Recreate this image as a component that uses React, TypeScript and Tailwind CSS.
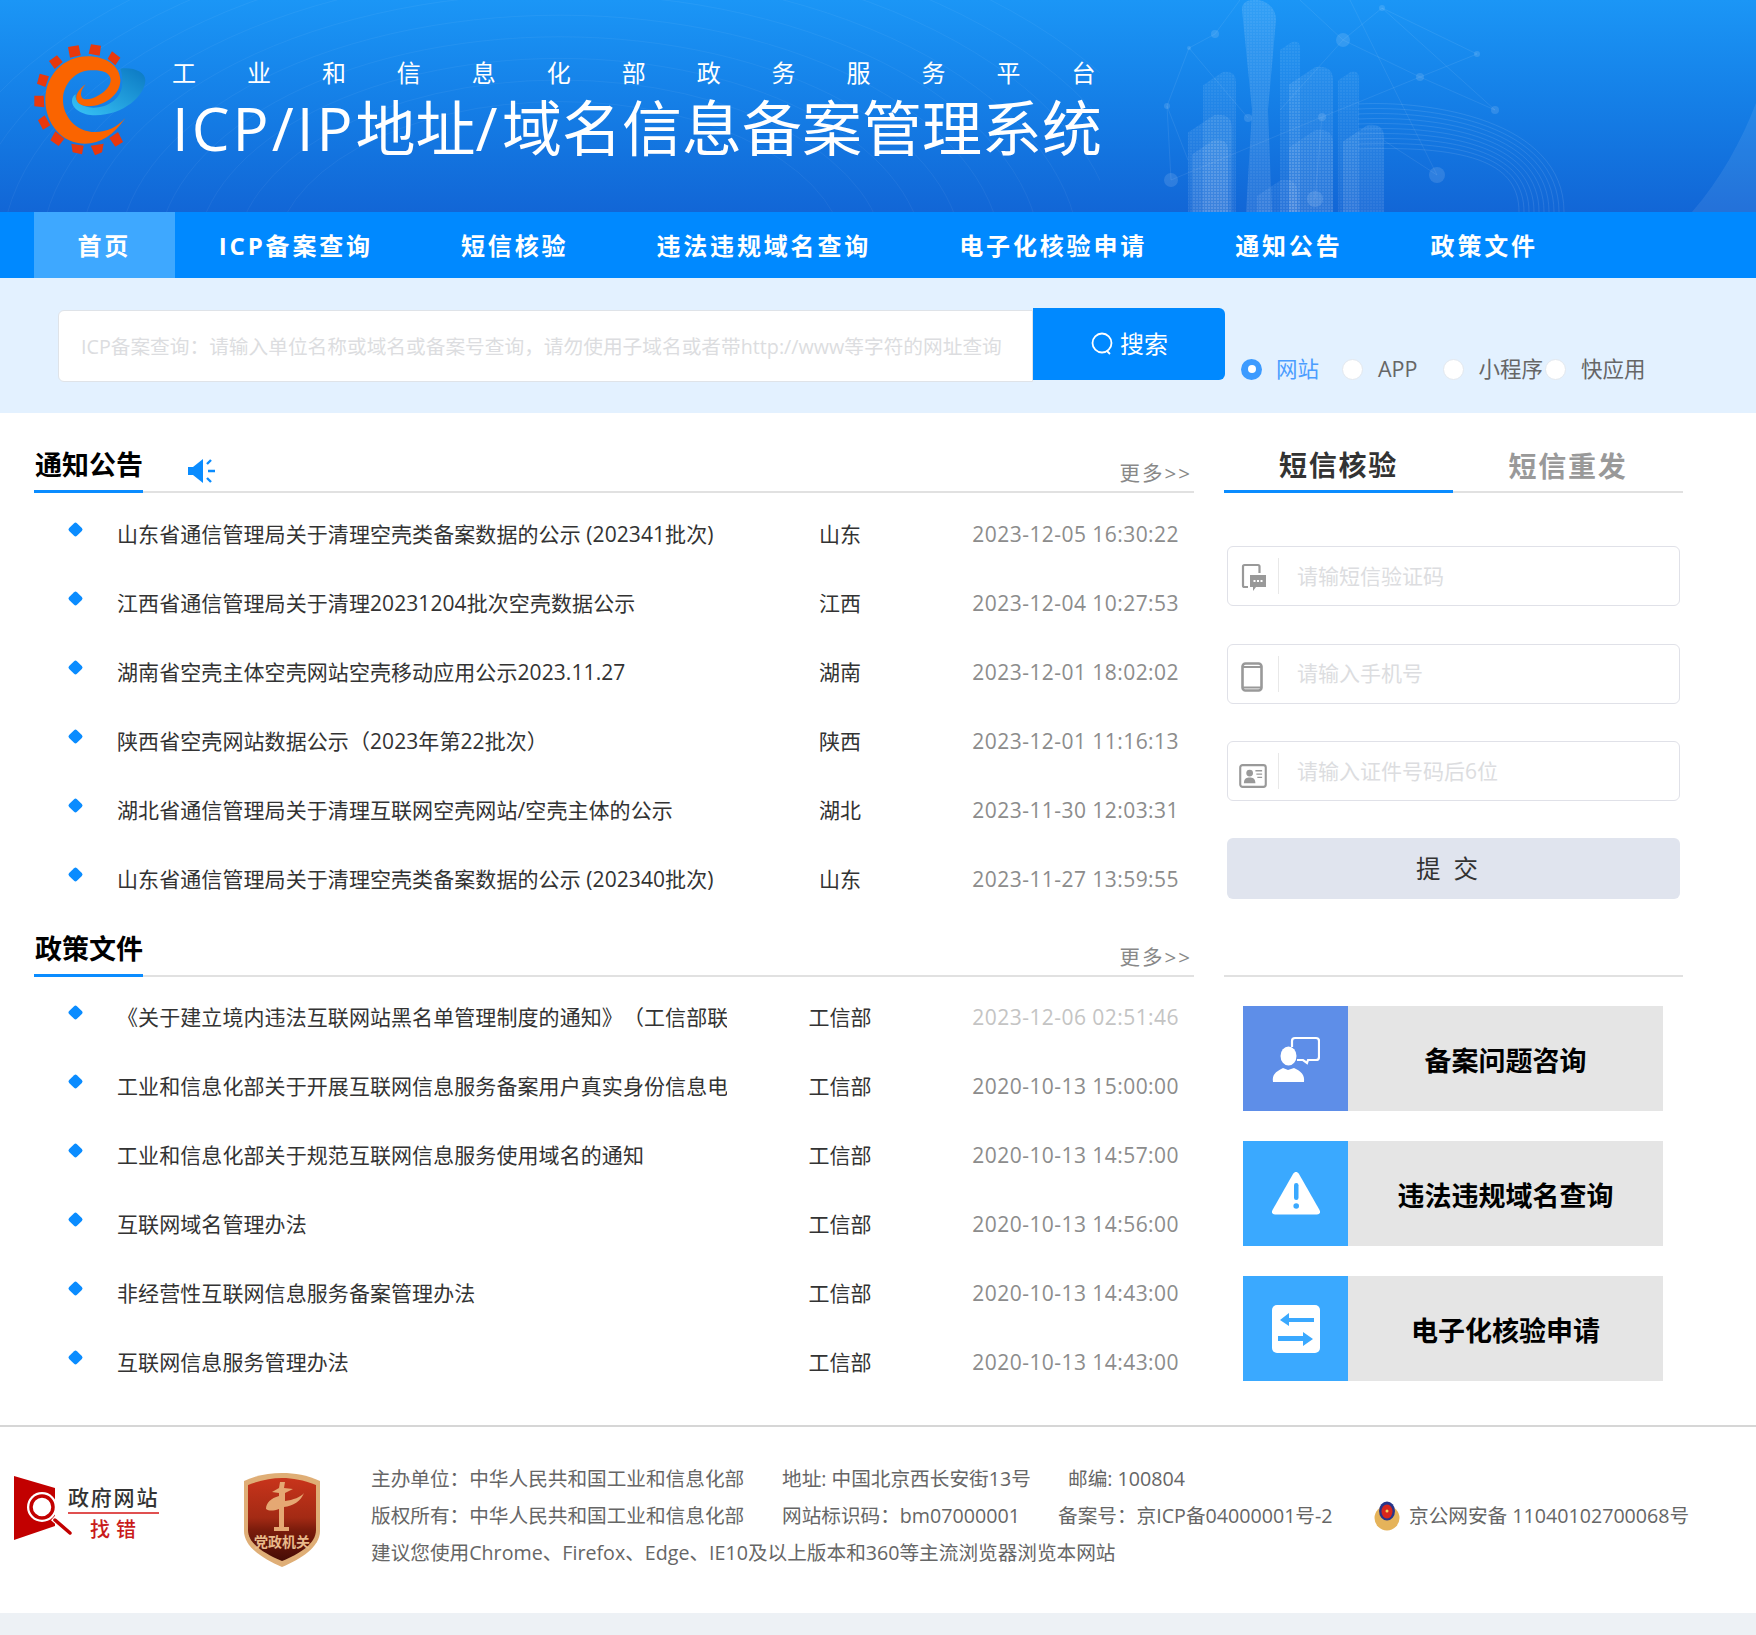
import type { ReactNode } from 'react';

const FONT = "font-['Open_Sans','Noto_Sans_CJK_SC',sans-serif]";

const notices = [
  ['山东省通信管理局关于清理空壳类备案数据的公示 (202341批次)', '山东', '2023-12-05 16:30:22'],
  ['江西省通信管理局关于清理20231204批次空壳数据公示', '江西', '2023-12-04 10:27:53'],
  ['湖南省空壳主体空壳网站空壳移动应用公示2023.11.27', '湖南', '2023-12-01 18:02:02'],
  ['陕西省空壳网站数据公示（2023年第22批次）', '陕西', '2023-12-01 11:16:13'],
  ['湖北省通信管理局关于清理互联网空壳网站/空壳主体的公示', '湖北', '2023-11-30 12:03:31'],
  ['山东省通信管理局关于清理空壳类备案数据的公示 (202340批次)', '山东', '2023-11-27 13:59:55'],
];

const policies = [
  ['《关于建立境内违法互联网站黑名单管理制度的通知》（工信部联', '工信部', '2023-12-06 02:51:46'],
  ['工业和信息化部关于开展互联网信息服务备案用户真实身份信息电', '工信部', '2020-10-13 15:00:00'],
  ['工业和信息化部关于规范互联网信息服务使用域名的通知', '工信部', '2020-10-13 14:57:00'],
  ['互联网域名管理办法', '工信部', '2020-10-13 14:56:00'],
  ['非经营性互联网信息服务备案管理办法', '工信部', '2020-10-13 14:43:00'],
  ['互联网信息服务管理办法', '工信部', '2020-10-13 14:43:00'],
];

const navItems = ['首页', 'ICP备案查询', '短信核验', '违法违规域名查询', '电子化核验申请', '通知公告', '政策文件'];

function Logo() {
  const teeth = [
    '203,80 235,75 241,105 209,112', '272,72 302,76 298,106 265,100', '335,93 360,112 345,135 322,115',
    '146,122 170,105 187,125 163,146', '118,160 146,168 135,200 110,190', '102,226 130,226 132,261 102,258',
    '113,300 133,285 150,315 128,328', '165,333 192,355 175,377 150,360', '213,370 250,376 245,402 217,396',
    '271,376 310,370 305,396 284,405', '327,353 353,335 368,365 345,379',
  ];
  return (
    <svg viewBox="95 65 345 345" className="w-[115px] h-[115px] shrink-0">
      <defs>
        <linearGradient id="swoosh" x1="0" y1="1" x2="1" y2="0">
          <stop offset="0" stopColor="#38c4f7" />
          <stop offset="1" stopColor="#0b78c2" />
        </linearGradient>
      </defs>
      {teeth.map(p => <polygon key={p} points={p} fill="#e8380d" />)}
      <path d="M360 145C400 140 435 155 435 180C435 225 370 285 285 285C245 285 215 265 215 242C215 232 220 225 226 222C222 240 240 262 280 262C320 262 358 238 365 200C368 180 365 160 360 145Z" fill="url(#swoosh)" />
      <path d="M375 293C340 345 300 370 255 370C185 370 135 310 135 238C135 165 190 108 262 108C320 108 360 140 360 180C360 225 310 258 265 258C240 258 225 245 228 228C232 212 245 200 256 192C245 205 238 220 245 232C252 240 275 238 295 225C320 210 335 190 330 172C325 155 300 148 270 150C225 152 190 190 188 235C186 285 225 335 285 335C320 335 350 320 375 293Z" fill="#fa6400" />
    </svg>
  );
}

function CityArt() {
  const columns = [
    [180, 42, 20, 170, 0.05], [103, 72, 33, 140, 0.06], [238, 72, 21, 140, 0.05], [189, 67, 44, 145, 0.07],
    [88, 115, 44, 97, 0.07], [92, 140, 36, 72, 0.07], [243, 125, 41, 87, 0.08], [189, 130, 44, 82, 0.05], [157, 180, 40, 32, 0.06],
  ];
  const lines = [
    '89,48 115,34 140,0', '89,48 67,106 71,180', '89,48 148,118', '67,106 88,160', '243,40 282,8', '243,40 180,110', '243,40 320,77 395,110',
    '282,8 377,54 320,77 222,117', '282,8 395,110', '250,0 337,175', '200,0 243,40', '283,140 337,175', '71,180 222,117', '222,117 215,199',
  ];
  const nodes = [
    [89, 48, 2], [115, 34, 4], [243, 40, 7], [282, 8, 3], [377, 54, 3], [320, 77, 4], [395, 110, 4],
    [337, 175, 8], [67, 106, 3], [71, 180, 7], [215, 199, 8], [222, 117, 4], [148, 118, 4],
  ];
  const building = (x: number, y: number, w: number, h: number) =>
    `M${x} ${y + h}V${y + w * 0.4}L${x + w * 0.6} ${y}Q${x + w} ${y - 2} ${x + w} ${y + w * 0.3}V${y + h}Z`;
  return (
    <svg viewBox="0 0 656 212" className="absolute right-0 top-0 w-[656px] h-[212px]">
      <defs>
        <pattern id="mesh" width="3" height="3" patternUnits="userSpaceOnUse">
          <circle cx="1" cy="1" r="0.7" fill="#fff" fillOpacity="0.14" />
        </pattern>
      </defs>
      {lines.map(l => <polyline key={l} points={l} fill="none" stroke="#fff" strokeOpacity="0.08" />)}
      {nodes.map(([x, y, r]) => <circle key={`${x}-${y}`} cx={x} cy={y} r={r} fill="#fff" fillOpacity="0.12" />)}
      {[0, 5, 10, 15, 20, 25, 30, 35, 40, 45].map(d => (
        <path key={d} d={`M${258} ${104 + d}C${330 + d} ${100 + d} ${464 - d} ${120 + d} ${464 - d} 212`} fill="none" stroke="#fff" strokeOpacity="0.1" />
      ))}
      {columns.map(([x, y, w, h, o]) => (
        <g key={`${x}-${y}`}>
          <path d={building(x, y, w, h)} fill="#fff" fillOpacity={o} />
          <path d={building(x, y, w, h)} fill="url(#mesh)" />
        </g>
      ))}
      <path d="M142 10C142 0 150 0 158 0C170 2 176 10 176 20L168 110L172 212H146L152 110Z" fill="#fff" fillOpacity="0.1" />
      <path d="M142 10C142 0 150 0 158 0C170 2 176 10 176 20L168 110L172 212H146L152 110Z" fill="url(#mesh)" />
      <path d="M592 212C620 180 642 140 656 103V212Z" fill="#fff" fillOpacity="0.08" />
    </svg>
  );
}

function WaveArt() {
  return (
    <svg viewBox="0 0 1100 212" className="absolute left-0 top-0 w-[1100px] h-[212px]">
      {[220, 250, 280, 310, 340, 370, 400, 430, 460, 490].map(r => (
        <ellipse key={r} cx="560" cy="260" rx={r * 1.3} ry={r * 0.72} fill="none" stroke="#fff" strokeOpacity="0.05" />
      ))}
    </svg>
  );
}

function Speaker() {
  return (
    <svg viewBox="0 0 28 26" className="w-[28px] h-[26px] text-[#0a8cff]">
      <path d="M0 9H5L15 1V25L5 17H0Z" fill="currentColor" />
      <path d="M19 6L23 2M20 13H27M19 20L23 24" stroke="currentColor" strokeWidth="2.4" fill="none" />
    </svg>
  );
}

function SectionHead({ title, icon }: { title: string; icon?: ReactNode }) {
  return (
    <div className="flex items-end border-b-2 border-[#e1e1e1] h-[80px]">
      <h2 className="text-[27px] font-bold text-black leading-[40px] border-b-[3px] border-[#0a8cff] pb-[5px] -mb-[2px] pl-px">{title}</h2>
      {icon && <span className="ml-[45px] mb-[7px]">{icon}</span>}
      <a className="ml-auto mr-[2px] mb-[2px] text-[20.500px] text-[#888] tracking-[2px]">更多&gt;&gt;</a>
    </div>
  );
}

function NewsRows({ rows, firstFaded }: { rows: string[][]; firstFaded?: boolean }) {
  return (
    <ul className="pt-[7px] [text-spacing-trim:space-all]">
      {rows.map(([title, area, date], i) => (
        <li key={title + date} className="flex items-center h-[69px] text-[21px]">
          <span className="ml-[36px] w-[11px] h-[11px] rotate-45 rounded-[2px] bg-[#0a8cff] -mt-[10px] shrink-0" />
          <a className="ml-[36px] w-[610px] overflow-hidden whitespace-nowrap text-[#333] tracking-[0.08px]">{title}</a>
          <span className="w-[100px] ml-[63px] text-center text-[#333]">{area}</span>
          <span className={`ml-auto mr-[15px] tracking-[0.45px] ${firstFaded && i === 0 ? 'text-[#c4c4c4]' : 'text-[#8c8c8c]'}`}>{date}</span>
        </li>
      ))}
    </ul>
  );
}

function SmsIcon() {
  return (
    <svg viewBox="0 0 26 30" className="w-[26px] h-[30px] text-[#999]">
      <path d="M7 24H3.5A1.5 1.5 0 0 1 2 22.500V3.500A1.500 1.500 0 0 1 3.500 2H17A1.500 1.500 0 0 1 18.500 3.500V10" fill="none" stroke="currentColor" strokeWidth="2.200" />
      <path d="M9 12H25V24H15L12 28V24H9Z" fill="currentColor" />
      <path d="M12.500 18H14.500M16 18H18M19.500 18H21.500" stroke="#fff" strokeWidth="2.200" />
    </svg>
  );
}

function PhoneIcon() {
  return (
    <svg viewBox="0 0 22 30" className="w-[22px] h-[30px] text-[#999] -ml-[4px] mt-[3px]">
      <rect x="1.500" y="1.500" width="19" height="27" rx="3" fill="none" stroke="currentColor" strokeWidth="2.600" />
      <path d="M1.500 5H20.500M1.500 25.500H20.500" stroke="currentColor" strokeWidth="2" />
    </svg>
  );
}

function IdIcon() {
  return (
    <svg viewBox="0 0 29 25" className="w-[28px] h-[24px] text-[#999] -ml-[2px] mt-[6px]">
      <rect x="1.200" y="1.200" width="26.600" height="22.600" rx="2.500" fill="none" stroke="currentColor" strokeWidth="2.200" />
      <circle cx="11" cy="9.500" r="3.500" fill="currentColor" />
      <path d="M5 20C5 15 8 14 11 14S17 15 17 20Z" fill="currentColor" />
      <path d="M17 7H24M18 10.500H24M19 14H24" stroke="currentColor" strokeWidth="1.400" />
    </svg>
  );
}

function FormField({ icon, placeholder }: { icon: ReactNode; placeholder: string }) {
  return (
    <div className="flex items-center h-[60px] ml-[3px] w-[453px] rounded-[6px] border border-[#e0e1e8] bg-white">
      <span className="w-[50px] flex justify-center pl-[2px] pt-[3px] shrink-0">{icon}</span>
      <span className="w-px h-[36px] bg-[#e8e8e8] shrink-0" />
      <input placeholder={placeholder} className="flex-1 min-w-0 pl-[18px] pt-[1px] text-[21px] outline-none placeholder:text-[#dcdde0]" />
    </div>
  );
}

function ConsultIcon() {
  return (
    <svg viewBox="0 0 48 48" className="w-[48px] h-[48px]">
      <path d="M20 12V6A3 3 0 0 1 23 3H44A3 3 0 0 1 47 6V22A3 3 0 0 1 44 25H36L35 28L31 25H25" fill="none" stroke="#fff" strokeWidth="2.200" />
      <ellipse cx="16.500" cy="21" rx="8" ry="9.500" fill="#fff" />
      <path d="M1 47C0 40 3 37 11 33L16 35L22 33C29 36 33 40 32 47Z" fill="#fff" />
    </svg>
  );
}

function WarnIcon() {
  return (
    <svg viewBox="0 0 48 44" className="w-[48px] h-[44px]">
      <path d="M24 0C25 0 26 .5 27 2L47.500 38C49 41 47 42.500 45 42.500H3C1 42.500-1 41 .5 38L21 2C22 .5 23 0 24 0Z" fill="#fff" />
      <rect x="22" y="11" width="4.500" height="17" rx="2.200" fill="#3aa9ff" />
      <circle cx="24.200" cy="34" r="2.800" fill="#3aa9ff" />
    </svg>
  );
}

function SwapIcon() {
  return (
    <svg viewBox="0 0 48 48" className="w-[48px] h-[48px]">
      <rect width="48" height="48" rx="5" fill="#fff" />
      <path d="M42 13H17V8L8 15L17 21V17H42Z" fill="#3aa9ff" />
      <path d="M6 31H31V27L41 34L31 41V36H6Z" fill="#3aa9ff" />
    </svg>
  );
}

function QuickLink({ icon, label, iconBg }: { icon: ReactNode; label: string; iconBg: string }) {
  return (
    <a className="flex h-[105px] w-[420px] ml-[19px]">
      <span className={`w-[105px] flex items-center justify-center ${iconBg}`}>{icon}</span>
      <span className="flex-1 flex items-center justify-center bg-[#e5e5e5] text-[27px] font-bold text-black pt-[6px]">{label}</span>
    </a>
  );
}

function GovErrorLogo() {
  return (
    <div className="relative w-[146px] h-[66px] shrink-0">
      <svg viewBox="0 0 60 66" className="absolute left-0 top-0 w-[60px] h-[66px]">
        <polygon points="0,0 41,12 41,50 0,64" fill="#c20000" />
        <circle cx="28" cy="31" r="15" fill="#fff" />
        <circle cx="28" cy="31" r="11" fill="#fff" stroke="#c20000" strokeWidth="3.500" />
        <path d="M39 42L56 57" stroke="#fff" strokeWidth="6" />
        <path d="M41 44L56 57" stroke="#c20000" strokeWidth="3.500" strokeLinecap="round" />
      </svg>
      <div className="absolute left-[54px] top-[8px] w-[91px] text-[21px] leading-[26px] tracking-[1.800px] text-[#333] whitespace-nowrap font-medium border-b-2 border-[#e05050] pb-[2px]">政府网站</div>
      <div className="absolute left-[56px] top-[41px] w-[92px] text-center text-[20px] leading-[26px] tracking-[6px] text-[#c91b1b] font-medium">找错</div>
    </div>
  );
}

function PartyBadge() {
  return (
    <div className="relative w-[78px] h-[94px] shrink-0">
      <svg viewBox="0 0 78 94" className="absolute inset-0 w-[78px] h-[94px]">
        <defs>
          <linearGradient id="shield" x1="0" y1="0" x2="0" y2="1">
            <stop offset="0" stopColor="#c8341b" />
            <stop offset="0.48" stopColor="#a32a14" />
            <stop offset="0.62" stopColor="#7c1c0c" />
            <stop offset="1" stopColor="#450c06" />
          </linearGradient>
        </defs>
        <path d="M1 8C14 2 26 0 39 0C52 0 64 2 77 8V58C77 74 58 86 39 94C20 86 1 74 1 58Z" fill="#dfae76" />
        <path d="M5 12C18 7 28 5 39 5C50 5 60 7 73 12V57C73 71 56 81 39 88C22 81 5 71 5 57Z" fill="url(#shield)" />
        <path d="M37 9L42 9L41 15L50 16L42 20V28C50 27 58 24 61 20C58 28 50 33 41 34V54H46V58H31V54H36V36C30 38 26 38 23 36C23 30 28 25 36 23V20L29 19L36 15Z" fill="#e5a873" />
      </svg>
      <span className="absolute left-0 right-0 top-[59px] text-center text-[14px] leading-[20px] font-bold text-[#e9b98a] whitespace-nowrap">党政机关</span>
    </div>
  );
}

function PoliceEmblem() {
  return (
    <svg viewBox="0 0 26 30" className="w-[26px] h-[30px] shrink-0">
      <ellipse cx="13" cy="17" rx="12.500" ry="12.500" fill="#e5b35a" />
      <ellipse cx="13" cy="10" rx="8" ry="9.500" fill="#27358a" />
      <ellipse cx="13" cy="10.500" rx="5.500" ry="7" fill="#d9261c" />
      <circle cx="13" cy="10" r="1.500" fill="#f4d35e" />
    </svg>
  );
}

export default function App() {
  return (
    <div className={`${FONT} w-full min-h-[1635px] bg-white flex flex-col`}>
      <header className="relative h-[212px] overflow-hidden bg-gradient-to-b from-[#1b96f6] to-[#1266d6] flex items-center pl-[32px]">
        <WaveArt />
        <CityArt />
        <div className="relative -mt-[14px]"><Logo /></div>
        <div className="relative ml-[25px] pt-[9px] text-white">
          <p className="text-[24px] leading-[34px] tracking-[50.950px] whitespace-nowrap">工业和信息化部政务服务平台</p>
          <h1 className="text-[60px] leading-[76px] font-normal whitespace-nowrap">
            <span className="tracking-[3px]">ICP/IP</span>地址<span className="tracking-[4.500px]">/</span>域名信息备案管理系统
          </h1>
        </div>
      </header>

      <nav className="h-[66px] bg-[#0089ff] flex pl-[34px]">
        {navItems.map((item, i) => (
          <a key={item} className={`flex items-center pt-[2px] text-[24px] font-bold text-white tracking-[2.850px] ${i === 0 ? 'bg-[#3ea8ff] pl-[43.500px] pr-[43.500px]' : 'px-[44px]'}`}>{item}</a>
        ))}
      </nav>

      <section className="h-[135px] bg-[#e3f1ff] flex items-start pl-[58px]">
        <input
          placeholder="ICP备案查询：请输入单位名称或域名或备案号查询，请勿使用子域名或者带http://www等字符的网址查询"
          className="mt-[32px] w-[975px] h-[72px] bg-white border border-[#dfe3e8] rounded-l-[6px] pl-[22px] text-[19.700px] outline-none placeholder:text-[#dcdde0]"
        />
        <button className="mt-[30px] w-[192px] h-[72px] bg-[#0089ff] rounded-r-[6px] text-white text-[24px] flex items-center justify-center gap-[6px]">
          <svg viewBox="0 0 24 26" className="w-[24px] h-[26px]">
            <circle cx="12" cy="12" r="9.500" fill="none" stroke="#fff" strokeWidth="1.800" />
            <path d="M17 20L20 23" stroke="#fff" strokeWidth="1.800" />
          </svg>
          搜索
        </button>
        <div className="mt-[79px] ml-[16px] flex items-center text-[21.500px] leading-[24px] text-[#666]">
          <span className="w-[21px] h-[21px] rounded-full bg-[#3d9bff] flex items-center justify-center"><span className="w-[8px] h-[8px] rounded-full bg-white" /></span>
          <span className="ml-[14px] text-[#4b9dff]">网站</span>
          <span className="ml-[23px] w-[21px] h-[21px] rounded-full bg-white border border-[#e3e8ee]" />
          <span className="ml-[15px]">APP</span>
          <span className="ml-[26px] w-[21px] h-[21px] rounded-full bg-white border border-[#e3e8ee]" />
          <span className="ml-[14px]">小程序</span>
          <span className="ml-[2px] w-[21px] h-[21px] rounded-full bg-white border border-[#e3e8ee]" />
          <span className="ml-[15px]">快应用</span>
        </div>
      </section>

      <main className="flex pl-[34px] h-[1012px]">
        <div className="w-[1160px]">
          <SectionHead title="通知公告" icon={<Speaker />} />
          <NewsRows rows={notices} />
          <div className="-mt-[17px]"><SectionHead title="政策文件" /></div>
          <div className="-mt-[1px]"><NewsRows rows={policies} firstFaded /></div>
        </div>

        <aside className="ml-[30px] w-[459px]">
          <div className="flex h-[80px] items-end border-b-2 border-[#e1e1e1] text-[28px] font-bold tracking-[1.800px]">
            <span className="w-[229px] text-center text-[#333] leading-[40px] pb-[5px] border-b-[3px] border-[#0a8cff] -mb-[2px]">短信核验</span>
            <span className="w-[230px] text-center text-[#999] leading-[40px] pb-[5px]">短信重发</span>
          </div>
          <div className="mt-[53px] flex flex-col gap-[37.500px]">
            <FormField icon={<SmsIcon />} placeholder="请输短信验证码" />
            <FormField icon={<PhoneIcon />} placeholder="请输入手机号" />
            <FormField icon={<IdIcon />} placeholder="请输入证件号码后6位" />
          </div>
          <button className="mt-[37px] ml-[3px] w-[453px] h-[61px] rounded-[6px] bg-[#e0e4ee] text-[24.500px] text-[#333] tracking-[13px] pt-[2px]">提交</button>
          <div className="mt-[76px] border-b-2 border-[#e1e1e1]" />
          <div className="mt-[29px] flex flex-col gap-[30px]">
            <QuickLink icon={<ConsultIcon />} label="备案问题咨询" iconBg="bg-[#5e8ee8]" />
            <QuickLink icon={<WarnIcon />} label="违法违规域名查询" iconBg="bg-[#3aa9ff]" />
            <QuickLink icon={<SwapIcon />} label="电子化核验申请" iconBg="bg-[#3aa9ff]" />
          </div>
        </aside>
      </main>

      <footer className="h-[188px] border-t-2 border-[#d6d6d6] flex items-start pl-[14px] pt-[46px] text-[19.650px] text-[#666]">
        <div className="mt-[3px]"><GovErrorLogo /></div>
        <div className="ml-[83px]"><PartyBadge /></div>
        <div className="ml-[50px] -mt-[13px] leading-[37px] whitespace-nowrap">
          <div className="flex">
            <span className="w-[411px]">主办单位：中华人民共和国工业和信息化部</span>
            <span className="w-[286px]">地址: 中国北京西长安街13号</span>
            <span>邮编: 100804</span>
          </div>
          <div className="flex items-center">
            <span className="w-[411px]">版权所有：中华人民共和国工业和信息化部</span>
            <span className="w-[276px]">网站标识码：bm07000001</span>
            <span className="w-[316px]">备案号：京ICP备04000001号-2</span>
            <PoliceEmblem />
            <span className="ml-[9px]">京公网安备 11040102700068号</span>
          </div>
          <div>建议您使用Chrome、Firefox、Edge、IE10及以上版本和360等主流浏览器浏览本网站</div>
        </div>
      </footer>
      <div className="h-[22px] bg-[#edf1f5]" />
    </div>
  );
}
